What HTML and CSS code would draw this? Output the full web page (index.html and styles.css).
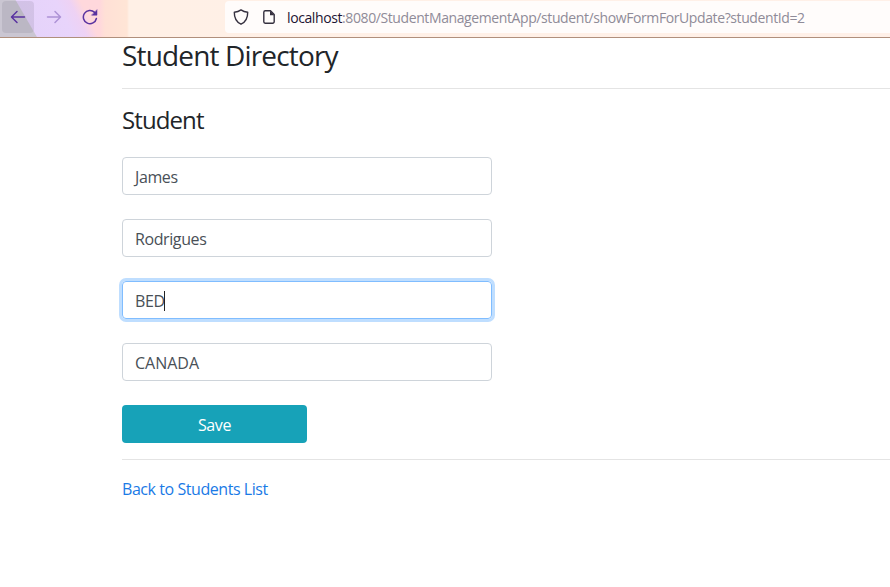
FILE: index.html
```html
<!DOCTYPE html>
<html lang="en">
<head>
<meta charset="utf-8">
<title>Student Directory</title>
<link rel="stylesheet" href="styles.css">
</head>
<body>
<header class="toolbar">
  <nav class="nav">
    <button class="nav-btn back" aria-label="Back"><svg width="16" height="16" viewBox="0 0 16 16"><path d="M14.5 8H1.8M7 2.5 1.5 8 7 13.5"/></svg></button>
    <button class="nav-btn forward" aria-label="Forward"><svg width="16" height="16" viewBox="0 0 16 16"><path d="M1.5 8h12.7M9 2.5 14.5 8 9 13.5"/></svg></button>
    <button class="nav-btn reload" aria-label="Reload"><svg width="16" height="16" viewBox="0 0 16 16"><path d="M14.4 9.500A6.600 6.600 0 1 1 12.600 3.400"/><path class="solid" d="M15 1v5.200H9.800z"/></svg></button>
  </nav>
  <div class="urlbar">
    <svg class="shield" width="16" height="16" viewBox="0 0 16 16"><path d="M8 .9C6 2.300 3.600 3 1.300 3.200 1.200 8.500 3 12.800 8 15.200 13 12.800 14.800 8.500 14.700 3.200 12.400 3 10 2.300 8 .9z"/></svg>
    <svg class="page-icon" width="12" height="14" viewBox="0 0 12 14"><path d="M2.200.8h5.300l3.700 3.700v7.200a1.500 1.500 0 0 1-1.500 1.500H2.200A1.500 1.500 0 0 1 .8 11.700V2.200A1.500 1.500 0 0 1 2.200.8z"/><path class="solid" d="M7 .8v4.400h4.400z"/></svg>
    <span class="url"><b>localhost</b>:8080/StudentManagementApp/student/showFormForUpdate?studentId=2</span>
  </div>
</header>
<main class="container">
  <h3 class="title">Student Directory</h3>
  <hr>
  <p class="subtitle">Student</p>
  <form class="form">
    <div class="control">James</div>
    <div class="control">Rodrigues</div>
    <div class="control focused">BED<i class="caret"></i></div>
    <div class="control country">CANADA</div>
    <button type="button" class="save">Save</button>
  </form>
  <hr>
  <a class="back-link" href="#">Back to Students List</a>
</main>
</body>
</html>
```
FILE: styles.css
```css
* { box-sizing: border-box; }
body {
  margin: 0;
  height: 587px;
  overflow: hidden;
  background: #fff;
  color: #212529;
  font: 16px/24px "Open Sans", "Noto Sans", sans-serif;
}
.toolbar {
  display: flex;
  height: 38px;
  border-bottom: 1px solid #b08f7c;
  background: linear-gradient(90deg, #ffd8dc 0, #ffd8dc 100px, #ffe0d6 105px, #ffe5d6 127px, #fff0e6 129px, #fff0e8 100%);
}
.nav {
  display: flex;
  width: 225px;
  padding: 1px 0 0 2px;
  gap: 4px;
  background:
    linear-gradient(60deg, #cac6d2 0, #cac6d2 31.5px, transparent 32.5px),
    linear-gradient(63deg, #e2d2fa 0, #e8d4fb 66px, #eed2f4 78px, transparent 88px);
}
.nav-btn {
  width: 32px; height: 32px; padding: 0;
  display: flex; align-items: center; justify-content: center;
  border: 0; border-radius: 4px; background: none;
}
.nav-btn svg { fill: none; stroke: #5932a0; stroke-width: 1.5; stroke-linecap: round; stroke-linejoin: round; }
.back { background: rgba(100, 90, 110, .14); }
.forward { opacity: .4; }
.nav-btn .solid { fill: #5932a0; stroke-width: .5; }
.urlbar {
  flex: 1; display: flex; align-items: center;
  margin-top: 1px; height: 32px; padding-left: 8px;
  border-radius: 4px 0 0 4px;
  background: #fffcfb;
}
.urlbar svg { fill: none; stroke: #35303f; stroke-width: 1.4; stroke-linejoin: round; flex: none; }
.page-icon { margin-left: 14px; }
.page-icon .solid { fill: #35303f; stroke: none; }
.url { margin: 2px 0 0 12px; font-size: 14px; letter-spacing: -.4px; color: #8f8b98; white-space: nowrap; }
.url b { font-weight: 400; color: #1d1433; }
.container { margin-left: 122px; }
.title { margin: 0; height: 42px; font-size: 28px; line-height: 34px; font-weight: 400; letter-spacing: -.84px; }
hr { margin: 8px 0 16px; border: 0; border-top: 1px solid #e4e4e4; }
.subtitle { margin: 0 0 22px; font-size: 24px; line-height: 30px; letter-spacing: -.9px; }
.form { display: flex; flex-direction: column; gap: 24px; }
.control {
  display: flex; align-items: center;
  width: 370px; height: 38px; padding: 2px 12px 0;
  border: 1px solid #ced4da; border-radius: 4px;
  color: #495057; font-size: 16px; letter-spacing: -.4px;
}
.country { letter-spacing: 0; }
.focused { border-color: #80bdff; box-shadow: 0 0 0 3px #bfdeff; }
.caret { width: 1px; height: 20px; margin-left: -1px; background: #222; }
.save {
  width: 185px; height: 38px; padding: 2px 0 0; border: 0; border-radius: 4px;
  background: #17a2b8; color: #fff; font: 16px/24px "Open Sans", sans-serif;
  letter-spacing: -.4px;
}
.form + hr { margin: 16px 0 17px; }
.back-link { display: inline-block; color: #1a7ae6; font-size: 16px; letter-spacing: -.44px; text-decoration: none; }
```
